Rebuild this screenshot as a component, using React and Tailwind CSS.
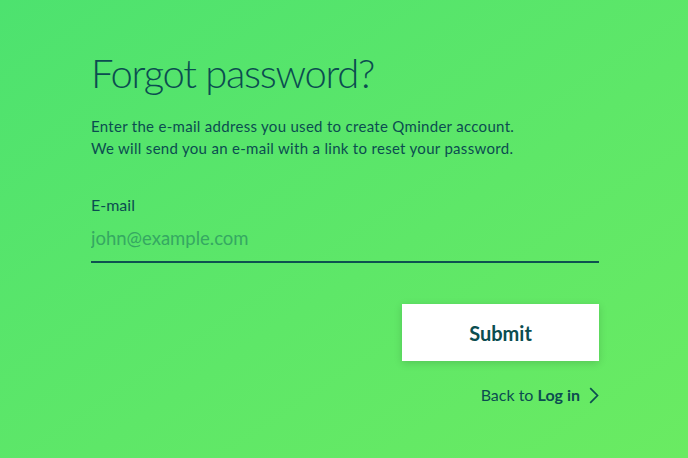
export default function App() {
  return (
    <div
      className="min-h-screen w-full bg-gradient-to-br from-[#4de26f] to-[#6aeb62] text-[#0b4d50]"
      style={{ fontFamily: "Lato, 'Noto Sans', sans-serif" }}
    >
      <div className="w-[508px] ml-[91px] pt-[47px]">
        <h1 className="text-[40px] font-light leading-[52px] tracking-[-1.3px]">
          Forgot password?
        </h1>
        <p className="mt-[16px] text-[15px] leading-[22px] tracking-[0.3px]">
          Enter the e-mail address you used to create Qminder account.
          <br />
          We will send you an e-mail with a link to reset your password.
        </p>

        <label className="block mt-[35px] text-[16px] leading-[22px]">E-mail</label>
        <input
          type="email"
          placeholder="john@example.com"
          className="block w-full mt-[9px] pb-[10px] bg-transparent border-b-2 border-[#0d5250] text-[18.5px] leading-[26px] outline-none placeholder:text-[#35a862]"
        />

        <div className="flex justify-end mt-[41px]">
          <button className="w-[197px] h-[57px] bg-white text-[20px] font-bold text-[#0b4d50] shadow-[0_2px_8px_rgba(0,0,0,0.15)]">
            Submit
          </button>
        </div>

        <div className="flex justify-end items-center mt-[22px] text-[16px] leading-[24px]">
          <span>
            Back to <span className="font-bold">Log in</span>
          </span>
          <svg
            width="10"
            height="17"
            viewBox="0 0 10 17"
            className="ml-[9px]"
            fill="none"
            stroke="#0b4d50"
            strokeWidth="1.7"
          >
            <path d="M1.2 1.2 L8.5 8.5 L1.2 15.8" />
          </svg>
        </div>
      </div>
    </div>
  );
}
